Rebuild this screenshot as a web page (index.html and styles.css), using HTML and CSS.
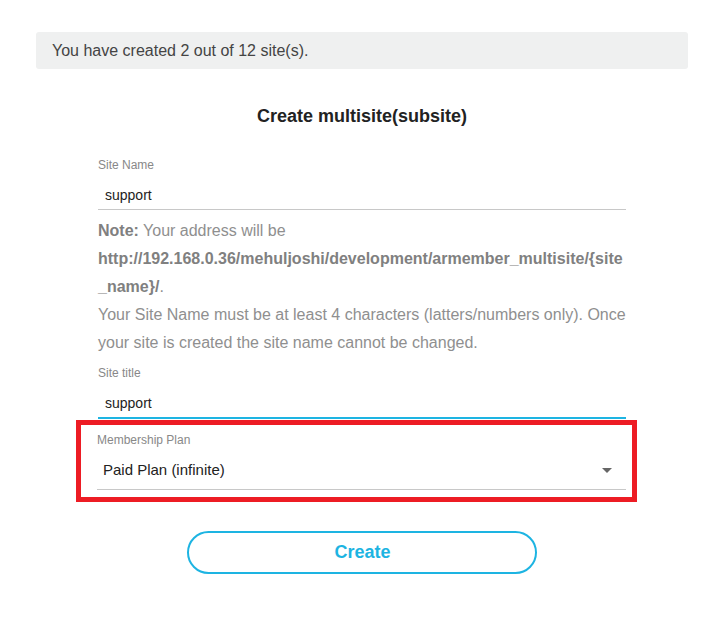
FILE: index.html
```html
<!DOCTYPE html>
<html lang="en">
<head>
<meta charset="utf-8">
<title>Create multisite</title>
<link rel="stylesheet" href="styles.css">
</head>
<body>
<div class="page">
  <div class="notice">You have created 2 out of 12 site(s).</div>
  <h2 class="title">Create multisite(subsite)</h2>
  <form class="form">
    <div class="field">
      <label class="label">Site Name</label>
      <div class="input">support</div>
    </div>
    <p class="note"><b>Note:</b> Your address will be <b class="url">http://192.168.0.36/mehuljoshi/development/armember_multisite/{site_name}/</b>.<br>Your Site Name must be at least 4 characters (latters/numbers only). Once your site is created the site name cannot be changed.</p>
    <div class="field field-title">
      <label class="label">Site title</label>
      <div class="input input-active">support</div>
    </div>
    <div class="field field-plan">
      <label class="label">Membership Plan</label>
      <div class="select">
        <span>Paid Plan (infinite)</span>
        <svg class="caret" width="10" height="5" viewBox="0 0 10 5"><path d="M0 0H10L5 5Z" fill="#666"/></svg>
      </div>
      <div class="highlight"></div>
    </div>
    <div class="actions">
      <button type="button" class="btn">Create</button>
    </div>
  </form>
</div>
</body>
</html>
```
FILE: styles.css
```css
* { box-sizing: border-box; }
html, body { margin: 0; padding: 0; background: #fff; }
body { font-family: "Liberation Sans", Arial, sans-serif; color: #333; }

.page {
  width: 652px;
  margin-left: 36px;
  padding-top: 32px;
}

.notice {
  background: #eff0f0;
  border-radius: 3px;
  height: 37px;
  padding: 0 16px;
  display: flex;
  align-items: center;
  font-size: 16px;
  color: #444;
}

.title {
  margin: 37px 0 0;
  text-align: center;
  font-size: 18px;
  line-height: 20px;
  font-weight: bold;
  color: #222;
}

.form {
  margin: 32px 62px 0;
}

.field { position: relative; }

.label {
  display: block;
  font-size: 12px;
  line-height: 14px;
  color: #888;
}

.input {
  padding: 13px 7px 4px;
  font-size: 14px;
  line-height: 20px;
  color: #222;
  border-bottom: 1px solid #c8c8c8;
}

.input-active {
  padding-bottom: 4px;
  border-bottom: 2px solid #1db4e2;
}

.note {
  margin: 7px 0 0;
  font-size: 16px;
  line-height: 28px;
  color: #8f8f8f;
  overflow-wrap: break-word;
}
.note b { color: #808080; }

.field-title { margin-top: 9px; }

.field-plan {
  margin-top: 14px;
}
.field-plan .label { margin-left: -1px; }

.select {
  display: flex;
  align-items: center;
  justify-content: space-between;
  padding: 13px 14px 9px 6px;
  margin-left: -1px;
  font-size: 15px;
  line-height: 20px;
  color: #222;
  border-bottom: 1px solid #c8c8c8;
}
.caret { display: block; margin-top: 1px; }

.highlight {
  position: absolute;
  left: -22px;
  right: -11px;
  top: -13px;
  bottom: -12px;
  border: 5px solid #ed1c24;
  pointer-events: none;
}

.actions {
  display: flex;
  justify-content: center;
  margin-top: 41px;
}

.btn {
  width: 350px;
  height: 43px;
  border: 2px solid #1db4e2;
  border-radius: 22px;
  background: #fff;
  color: #1db4e2;
  font-family: "Liberation Sans", Arial, sans-serif;
  font-size: 18px;
  font-weight: bold;
  padding: 0 0 0 1px;
}
```
